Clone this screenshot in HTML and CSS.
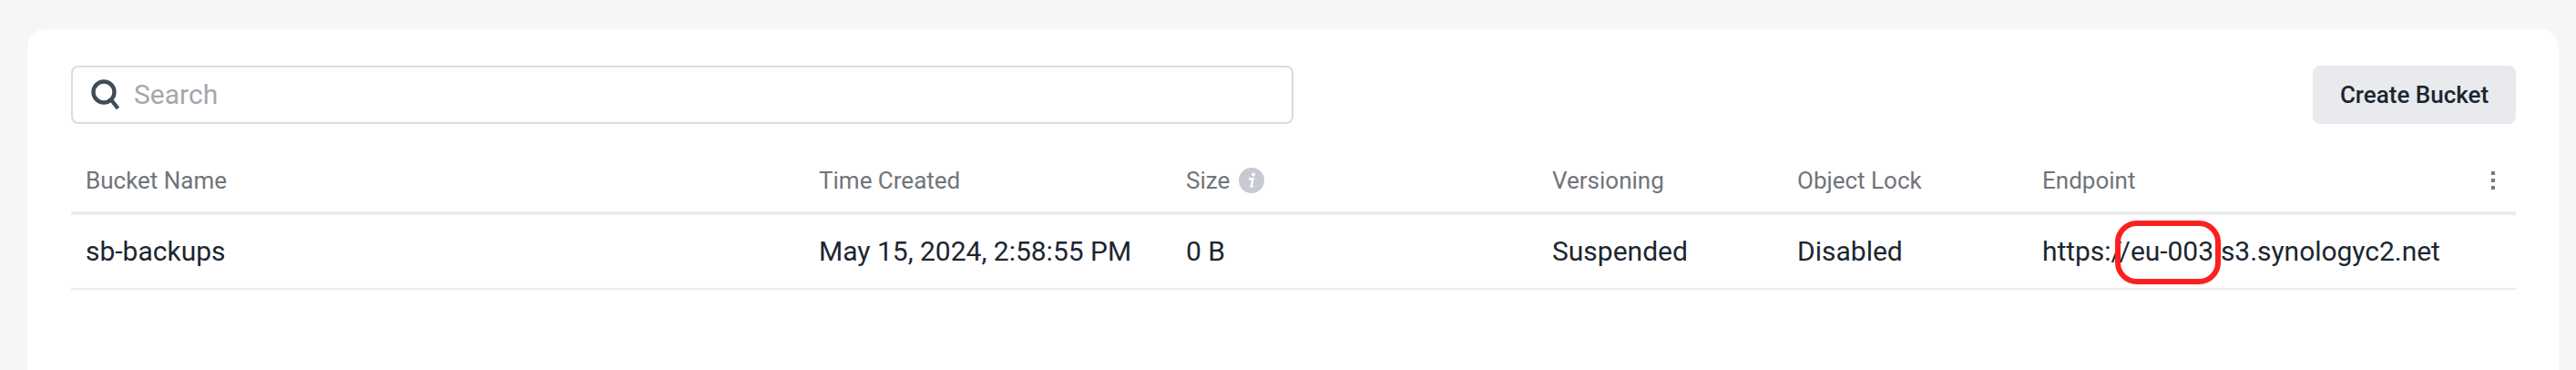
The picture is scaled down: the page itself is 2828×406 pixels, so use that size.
FILE: index.html
```html
<!DOCTYPE html>
<html lang="en">
<head>
 <meta charset="UTF-8">
 <title>Buckets</title>
 <link rel="stylesheet" href="styles.css">
</head>
<body>
<div class="card">
 <div class="toolbar">
  <div class="search">
   <svg class="searchIcon" width="36" height="36" viewBox="0 0 36 36" fill="none" stroke="#414b57" stroke-width="4.4">
    <circle cx="15" cy="15" r="11.5"/>
    <path d="M23 23.5L30.5 33"/>
   </svg>
   <span class="placeholder">Search</span>
  </div>
  <button class="createBtn">Create Bucket</button>
 </div>

 <div class="row headRow">
  <div>Bucket Name</div>
  <div>Time Created</div>
  <div class="sizeHead">Size
   <svg width="28" height="28" viewBox="0 0 28 28">
    <circle cx="14" cy="14" r="14" fill="#c8cad2"/>
    <circle cx="16" cy="7.5" r="2" fill="#fff"/>
    <path d="M11 12.2h4.6l-2 8.2h2.2" fill="none" stroke="#fff" stroke-width="2.4"/>
   </svg>
  </div>
  <div>Versioning</div>
  <div>Object Lock</div>
  <div class="endpointHead">Endpoint
   <svg width="4" height="20" viewBox="0 0 4 20" fill="#73777f">
    <rect width="4" height="4"/>
    <rect y="8" width="4" height="4"/>
    <rect y="16" width="4" height="4"/>
   </svg>
  </div>
 </div>

 <div class="row bodyRow">
  <div>sb-backups</div>
  <div>May 15, 2024, 2:58:55 PM</div>
  <div>0 B</div>
  <div>Suspended</div>
  <div>Disabled</div>
  <div class="endpointCell">https:/<span class="marked">/eu-003.<span class="ring"></span></span>s3.synologyc2.net</div>
 </div>
</div>
</body>
</html>
```

FILE: styles.css
```css
* {
  margin: 0;
  padding: 0;
  box-sizing: border-box;
}

body {
  height: 406px;
  overflow: hidden;
  padding: 32px 19px 0 30px;
  background-color: #f5f6f8;
  font-family: Roboto, sans-serif;
  color: #1b2630;
}

.card {
  height: 374px;
  padding: 40px 47px 0 48px;
  background-color: #fff;
  border-radius: 20px 20px 0 0;
}

.toolbar {
  display: flex;
  justify-content: space-between;
  height: 64px;
  margin-bottom: 32px;
}

.search {
  display: flex;
  align-items: center;
  gap: 12px;
  width: 1342px;
  padding-left: 19px;
  border: 2px solid #d9dce1;
  border-radius: 8px;
}

.searchIcon {
  flex: none;
}

.placeholder {
  padding-bottom: 2px;
  font-size: 30px;
  color: #a3a7ad;
}

.createBtn {
  width: 223px;
  border: none;
  border-radius: 8px;
  background-color: #e9eaee;
  font-family: Roboto, sans-serif;
  font-size: 26px;
  font-weight: 500;
  color: #1b2630;
}

.row {
  display: grid;
  grid-template-columns: 804px 403px 402px 269px 269px 537px;
  align-items: center;
}

.row > div {
  padding-left: 17px;
}

.row > div:first-child {
  padding-left: 16px;
}

.headRow {
  height: 68px;
  padding-bottom: 4px;
  border-bottom: 4px solid #ececf0;
  font-size: 26px;
  color: #707479;
}

.bodyRow {
  height: 82px;
  padding-bottom: 2px;
  border-bottom: 2px solid #ececf0;
  font-size: 30px;
}

.endpointCell {
  letter-spacing: -0.04px;
}

.sizeHead {
  display: flex;
  align-items: center;
  gap: 10px;
}

.endpointHead {
  display: flex;
  align-items: center;
  justify-content: space-between;
  padding-right: 23px;
}

.marked {
  position: relative;
}

/* red annotation drawn over the url */
.ring {
  position: absolute;
  left: -5px;
  top: -16px;
  width: 116px;
  height: 70px;
  border: 6px solid #fb2020;
  border-radius: 24px;
}
```
